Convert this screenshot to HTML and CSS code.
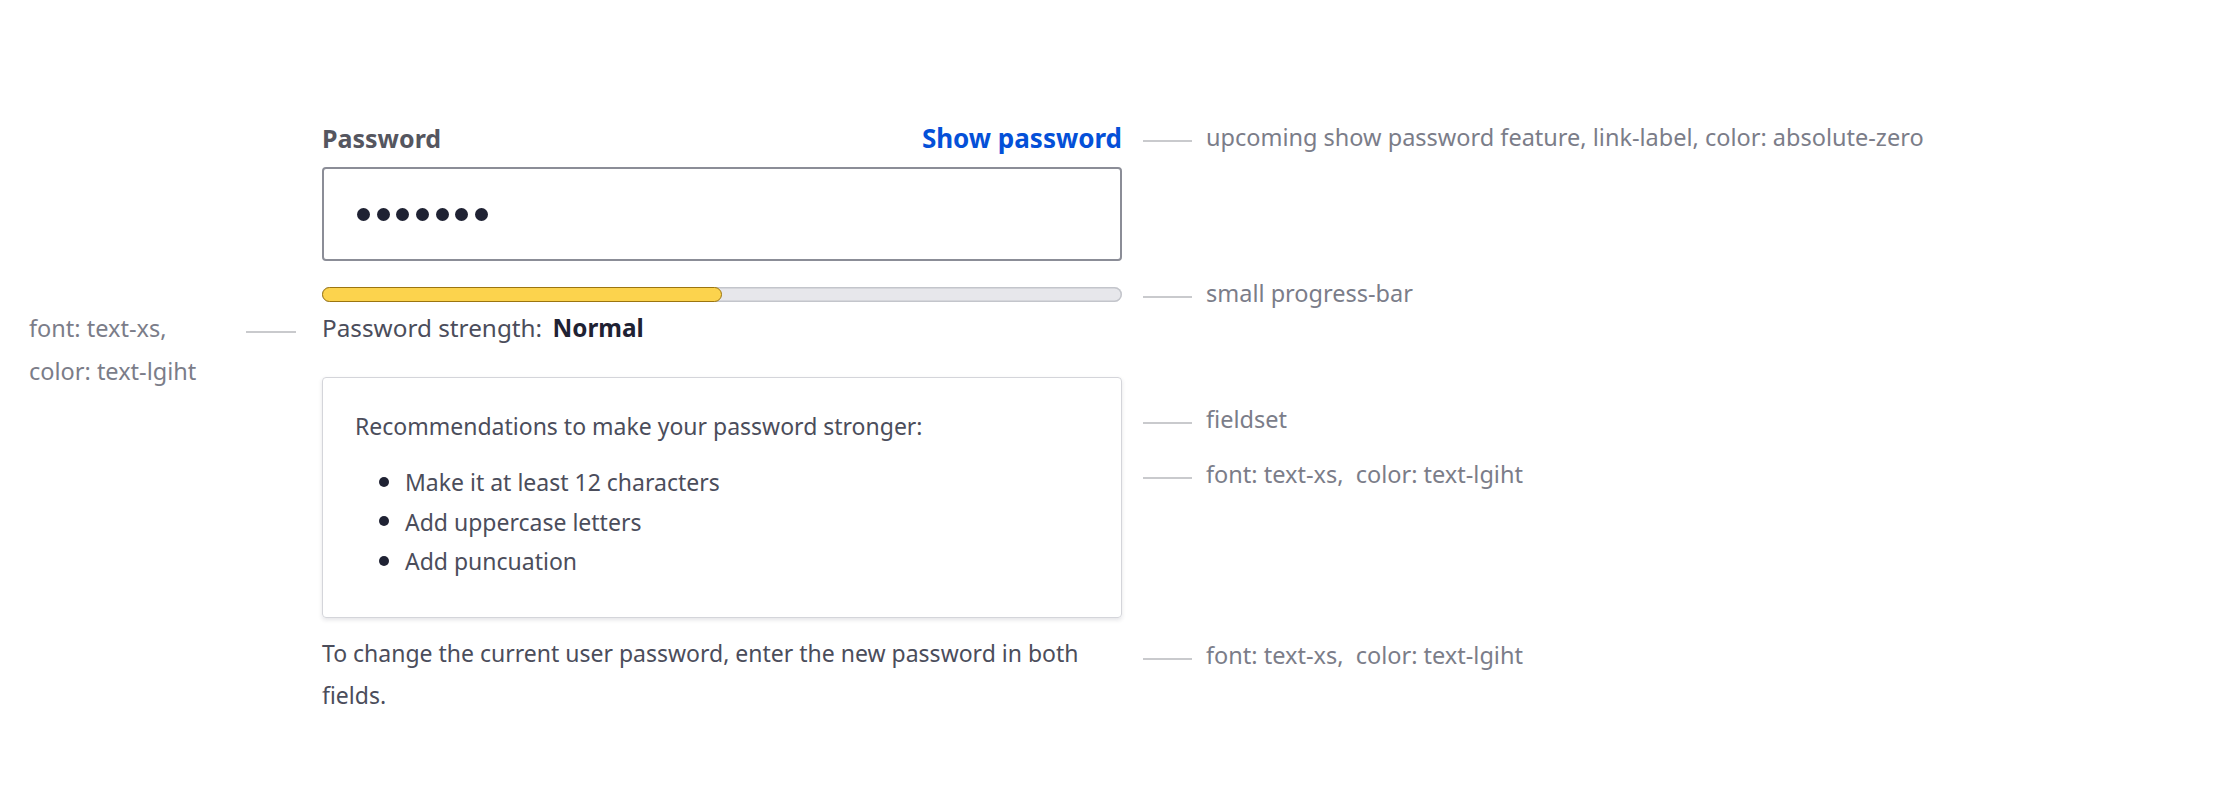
FILE: index.html
```html
<!DOCTYPE html>
<html lang="en">
<head>
<meta charset="utf-8">
<title>Password field</title>
<link rel="stylesheet" href="styles.css">
</head>
<body>
<main class="page">
  <div class="field">
    <div class="label-row">
      <span class="label">Password</span>
      <a class="link-label" href="#">Show password</a>
      <div class="callout callout-label">upcoming show password feature, link-label, color: absolute-zero</div>
    </div>

    <div class="input">
      <span class="dot"></span><span class="dot"></span><span class="dot"></span><span class="dot"></span><span class="dot"></span><span class="dot"></span><span class="dot"></span>
    </div>

    <div class="bar">
      <div class="bar-fill" style="width: 50%"></div>
      <div class="callout callout-bar">small progress-bar</div>
    </div>

    <div class="strength">
      Password strength: <b class="strength-value">Normal</b>
      <div class="callout-left">
        <div class="callout-left-text">font: text-xs,<br>color: text-lgiht</div>
      </div>
    </div>

    <fieldset class="tips">
      <p class="tips-title">Recommendations to make your password stronger:</p>
      <ul class="tips-list">
        <li>Make it at least 12 characters</li>
        <li>Add uppercase letters</li>
        <li>Add puncuation</li>
      </ul>
      <div class="callout callout-fieldset">fieldset</div>
      <div class="callout callout-font">font: text-xs,&nbsp; color: text-lgiht</div>
    </fieldset>

    <p class="note">
      To change the current user password, enter the new password in both fields.
      <span class="callout callout-note">font: text-xs,&nbsp; color: text-lgiht</span>
    </p>
  </div>
</main>
</body>
</html>
```

FILE: styles.css
```css
* {
  box-sizing: border-box;
}

html, body {
  margin: 0;
  background: #ffffff;
}

body {
  font-family: "Noto Sans", "DejaVu Sans", sans-serif;
  font-size: 23px;
  color: #4b4d5b;
}

.page {
  padding: 120px 0 0 322px;
}

.field {
  position: relative;
  width: 800px;
}

/* label row */
.label-row {
  position: relative;
  display: flex;
  justify-content: space-between;
  align-items: baseline;
  height: 36px;
  line-height: 36px;
}

.label {
  font-size: 25px;
  font-weight: 700;
  color: #55565f;
}

.link-label {
  font-size: 26px;
  font-weight: 700;
  color: #0450d8;
  text-decoration: none;
}

/* input */
.input {
  margin-top: 11px;
  height: 94px;
  border: 2px solid #8b8d97;
  border-radius: 4px;
  padding-left: 33px;
  display: flex;
  align-items: center;
  gap: 6.7px;
}

.dot {
  width: 13px;
  height: 13px;
  border-radius: 50%;
  background: #1f2233;
}

/* progress bar */
.bar {
  position: relative;
  margin-top: 26px;
  height: 15px;
  border-radius: 8px;
  background: #e7e7eb;
  box-shadow: inset 0 0 0 1.5px #c3c5cb;
  display: flex;
}

.bar-fill {
  height: 100%;
  border: 1.5px solid #9b7510;
  background: #fcd34d;
  border-radius: 8px;
}

/* strength */
.strength {
  position: relative;
  margin-top: 6px;
  font-size: 24.3px;
  line-height: 40px;
}

.strength-value {
  margin-left: 4px;
  font-weight: 700;
  color: #1f2233;
}

/* fieldset */
.tips {
  position: relative;
  margin: 29px 0 0;
  padding: 28px 32px 35px;
  height: 241px;
  border: 1px solid #d4d5da;
  border-radius: 4px;
  box-shadow: 0 2px 4px rgba(30, 30, 60, 0.12);
  min-width: 0;
}

.tips-title {
  margin: 0;
  line-height: 40px;
}

.tips-list {
  list-style: none;
  margin: 17px 0 0;
  padding: 0 0 0 24px;
}

.tips-list li {
  display: flex;
  align-items: center;
  gap: 16px;
  line-height: 39.5px;
}

.tips-list li::before {
  content: "";
  flex: none;
  width: 10px;
  height: 10px;
  margin-top: -2px;
  border-radius: 50%;
  background: #1f2233;
}

/* note */
.note {
  position: relative;
  margin: 14px 0 0;
  line-height: 42px;
}

/* callouts */
.callout {
  position: absolute;
  left: calc(100% + 21px);
  display: flex;
  align-items: flex-start;
  gap: 14px;
  line-height: 40px;
  font-size: 23.5px;
  font-weight: 400;
  color: #7b7d89;
  white-space: nowrap;
}

.callout::before {
  content: "";
  flex: none;
  width: 49px;
  height: 1.5px;
  margin-top: 23px;
  background: #c9cacd;
}

.callout-label { top: -3px; }
.callout-bar { top: -14px; }
.callout-fieldset { top: 21px; left: calc(100% + 22px); }
.callout-font { top: 76px; left: calc(100% + 22px); }
.callout-note { top: 3px; }

.callout-left {
  position: absolute;
  right: calc(100% + 26px);
  top: -1px;
  width: 267px;
  display: flex;
  align-items: flex-start;
  font-size: 23.5px;
  color: #7b7d89;
  line-height: 43px;
}

.callout-left-text {
  flex: 1;
}

.callout-left::after {
  content: "";
  flex: none;
  width: 50px;
  height: 1.5px;
  margin-top: 24px;
  background: #c9cacd;
}
```
